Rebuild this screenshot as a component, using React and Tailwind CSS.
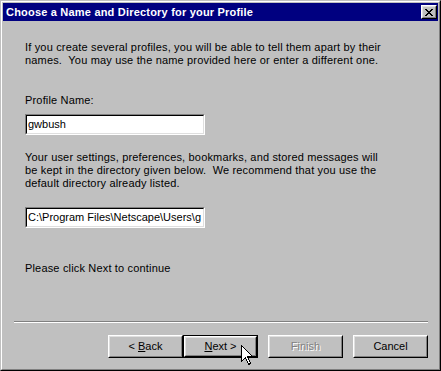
import React from 'react';

const font = { fontFamily: '"Liberation Sans", Arial, sans-serif' };

const Button = ({ children, isDefault, disabled }) => (
    <div className={`w-[75px] h-[23px] ${isDefault ? 'border border-black' : ''}`}>
        <div className={`h-full border border-t-white border-l-white border-r-black border-b-black`}>
            <div className="h-full flex items-center justify-center border border-t-[#dfdfdf] border-l-[#dfdfdf] border-r-[#808080] border-b-[#808080] bg-[#c0c0c0]">
                <span
                    className={`text-[11px] ${disabled ? 'text-[#808080] [text-shadow:1px_1px_0_#fff]' : 'text-black'}`}
                >
                    {children}
                </span>
            </div>
        </div>
    </div>
);

const TextBox = ({ value }) => (
    <div className="w-[180px] h-[21px] border border-t-[#808080] border-l-[#808080] border-r-white border-b-white">
        <div className="h-full border border-t-black border-l-black border-r-[#dfdfdf] border-b-[#dfdfdf] bg-white overflow-hidden whitespace-nowrap flex items-center pl-[1px]">
            <span className="text-[11px] text-black tracking-normal">{value}</span>
        </div>
    </div>
);

const App = () => {
    return (
        <div className="w-[441px] h-[371px] bg-[#c0c0c0]" style={font}>
            {/* window frame */}
            <div className="h-full border border-t-[#c0c0c0] border-l-[#c0c0c0] border-r-black border-b-black">
                <div className="h-full border border-t-white border-l-white border-r-[#808080] border-b-[#808080] p-[1px] flex flex-col">
                    {/* title bar */}
                    <div className="h-[18px] bg-[#000080] flex items-center justify-between pl-[3px] pr-[1px]">
                        <span className="text-white font-bold text-[11px] tracking-[0.2px]">
                            Choose a Name and Directory for your Profile
                        </span>
                        <div className="w-[16px] h-[14px] border border-t-white border-l-white border-r-black border-b-black">
                            <div className="h-full border border-t-[#dfdfdf] border-l-[#dfdfdf] border-r-[#808080] border-b-[#808080] bg-[#c0c0c0] flex items-center justify-center">
                                <svg width="8" height="7" viewBox="0 0 8 7" shapeRendering="crispEdges">
                                    <path d="M0 0h2v1h-2zM6 0h2v1h-2zM1 1h2v1h-2zM5 1h2v1h-2zM2 2h4v1h-4zM3 3h2v1h-2zM2 4h4v1h-4zM1 5h2v1h-2zM5 5h2v1h-2zM0 6h2v1h-2zM6 6h2v1h-2z" fill="#000" />
                                </svg>
                            </div>
                        </div>
                    </div>

                    {/* body */}
                    <div className="flex-1 flex flex-col pl-[22px] text-[11px] text-black leading-[13px] tracking-[0.17px]">
                        <p className="mt-[20px]">
                            If you create several profiles, you will be able to tell them apart by their
                            <br />
                            names.&nbsp; You may use the name provided here or enter a different one.
                        </p>
                        <p className="mt-[27px]">Profile Name:</p>
                        <div className="mt-[7px]">
                            <TextBox value="gwbush" />
                        </div>
                        <p className="mt-[16px]">
                            Your user settings, preferences, bookmarks, and stored messages will
                            <br />
                            be kept in the directory given below.&nbsp; We recommend that you use the
                            <br />
                            default directory already listed.
                        </p>
                        <div className="mt-[17px]">
                            <TextBox value="C:\Program Files\Netscape\Users\g" />
                        </div>
                        <p className="mt-[34px]">Please click Next to continue</p>
                    </div>

                    {/* separator */}
                    <div className="ml-[11px] mr-[10px] h-[2px] border-t border-t-[#808080] border-b border-b-white" />

                    {/* buttons */}
                    <div className="relative flex justify-end pr-[10px] pt-[12px] pb-[10px]">
                        <Button>&lt; <u>B</u>ack</Button>
                        <Button isDefault><u>N</u>ext &gt;</Button>
                        <div className="w-[10px]" />
                        <Button disabled>Finish</Button>
                        <div className="w-[10px]" />
                        <Button>Cancel</Button>

                        {/* mouse pointer */}
                        <svg
                            className="absolute left-[238px] top-[22px]"
                            width="13"
                            height="21"
                            viewBox="0 0 13 21"
                            shapeRendering="crispEdges"
                        >
                            <path
                                d="M0.5 0.5 L0.5 16.5 L4.5 12.5 L7.5 19.5 L9.5 18.5 L6.5 11.5 L11.5 11.5 Z"
                                fill="#fff"
                                stroke="#000"
                                strokeWidth="1"
                            />
                        </svg>
                    </div>
                </div>
            </div>
        </div>
    );
};

export default App;
